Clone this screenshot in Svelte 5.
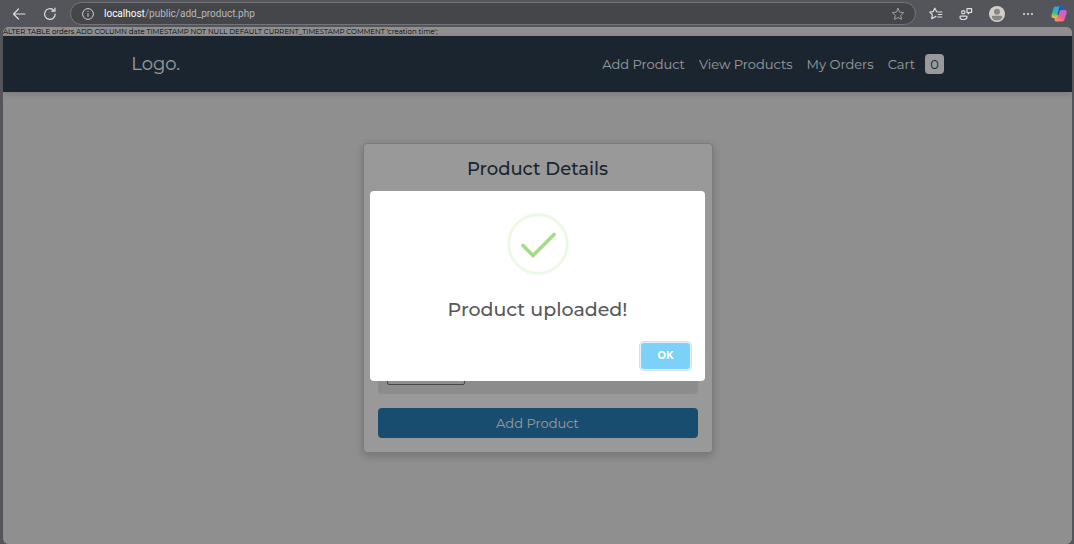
<script>
  let count = $state(0);
</script>

<div class="browser">
  <div class="toolbar">
    <button class="tool" aria-label="Back">
      <svg width="16" height="16" viewBox="0 0 16 16"><path d="M14 8H2.500M7.500 3l-5 5 5 5" /></svg>
    </button>
    <button class="tool" aria-label="Reload">
      <svg width="16" height="16" viewBox="0 0 16 16"><path d="M13.2 8a5.3 5.3 0 1 1-1.8-4M13 2v3.2H9.7" /></svg>
    </button>
    <div class="address">
      <svg width="14" height="14" viewBox="0 0 14 14"><circle cx="7" cy="7" r="5.4" /><path d="M7 6.3v3.5M7 4v1" /></svg>
      <span class="url"><b>localhost</b>/public/add_product.php</span>
      <button class="tool star" aria-label="Favorite">
        <svg width="14" height="14" viewBox="0 0 14 14"><path d="M7 1.4l1.7 3.7 4 .5-3 2.8.8 4L7 10.5l-3.5 1.9.8-4-3-2.8 4-.5z" /></svg>
      </button>
    </div>
    <div class="actions">
      <button class="tool" aria-label="Favorites">
        <svg width="14" height="14" viewBox="0 0 14 14"><path d="M8.800 5h4M9.300 7.500h3.500M8.800 10h4M7.700 4.700L5.800 1.200 4.200 4.600l-3.400.5 2.500 2.600-.6 4L6 9.900l1-.6" /></svg>
      </button>
      <button class="tool" aria-label="Share">
        <svg width="14" height="14" viewBox="0 0 14 14"><circle cx="4.3" cy="5.3" r="1.7" /><path d="M1.5 9.2h5.7c.8 0 1 .6.8 1.3-.4 1.4-1.8 2-3.4 2-2.3 0-3.6-1-3.6-2.6 0-.4.2-.7.5-.7zM8 1.7h4.6v3.6h-1.9L9.2 6.8V5.3H8z" /></svg>
      </button>
      <button class="tool" aria-label="Profile">
        <svg class="solid" width="16" height="16" viewBox="0 0 16 16"><circle cx="8" cy="8" r="8" fill="#d2cfca" /><circle cx="8" cy="5.8" r="3" fill="#888682" /><path d="M2.8 11.2c0-1 .6-1.4 1.5-1.4h7.4c.9 0 1.500.4 1.500 1.400-.7 2-2.800 3.300-5.200 3.300s-4.500-1.300-5.200-3.300z" fill="#888682" /></svg>
      </button>
      <button class="tool" aria-label="More">
        <svg class="solid" width="14" height="14" viewBox="0 0 14 14"><circle cx="3" cy="7" r="1" /><circle cx="7" cy="7" r="1" /><circle cx="11" cy="7" r="1" /></svg>
      </button>
      <button class="tool" aria-label="Copilot">
        <svg class="solid" width="16" height="16" viewBox="0 0 16 16">
          <defs>
            <linearGradient id="cool" x1="0" y1="0" x2="0" y2="1"><stop offset="0" stop-color="#22a7f0" /><stop offset=".5" stop-color="#38b99a" /><stop offset="1" stop-color="#f3c81e" /></linearGradient>
            <linearGradient id="warm" x1="1" y1="0" x2="0" y2="1"><stop offset="0" stop-color="#a56cf0" /><stop offset=".5" stop-color="#ef5d9b" /><stop offset="1" stop-color="#ff9a55" /></linearGradient>
          </defs>
          <path d="M4.800.6h5.700c1 0 1.600.5 1.900 1.500l.5 1.900h-2.400c-1 0-1.500.6-1.800 1.600l-1.500 5c-.3 1-.9 1.500-1.900 1.500H2.500C.8 12.100 0 10.700.5 9L2.300 2.900C2.700 1.400 3.500.6 4.800.6z" fill="url(#cool)" />
          <path d="M8.500.6h2c1 0 1.600.5 1.900 1.500l.6 2h-2.500c-1 0-1.600.6-1.900 1.600L7.600 9H6.200L8 2.200z" fill="#1d55c9" />
          <path d="M11.200 15.400H5.500c-1 0-1.500-.5-1.800-1.500l-.5-1.800h2.300c1 0 1.500-.5 1.800-1.500l1.500-5C9.100 4.500 9.600 4 10.600 4h2.900c1.700 0 2.500 1.300 2 3l-1.800 6.100c-.4 1.500-1.200 2.300-2.500 2.300z" fill="url(#warm)" />
        </svg>
      </button>
    </div>
  </div>

  <div class="page">
    <div class="notice">ALTER TABLE orders ADD COLUMN date TIMESTAMP NOT NULL DEFAULT CURRENT_TIMESTAMP COMMENT 'creation time';</div>
    <header>
      <a class="logo" href="#home">Logo.</a>
      <nav>
        <a href="#add">Add Product</a>
        <a href="#products">View Products</a>
        <a href="#orders">My Orders</a>
        <a class="cart" href="#cart">Cart <span class="badge">{count}</span></a>
      </nav>
    </header>
    <main>
      <form class="card" onsubmit={(e) => e.preventDefault()}>
        <h1>Product Details</h1>
        <div class="upload"><input type="file" aria-label="Product file" /></div>
        <button class="submit">Add Product</button>
      </form>
    </main>

    <div class="overlay">
      <div class="modal" role="dialog" aria-labelledby="result">
        <svg class="success" width="62" height="62" viewBox="0 0 62 62">
          <circle cx="31" cy="31" r="29.300" fill="none" stroke="#edf8e7" stroke-width="3" />
          <path d="M16 32.500l10 10L47 21.500" fill="none" stroke="#a5dc86" stroke-width="3.600" stroke-linecap="round" />
        </svg>
        <h2 id="result">Product uploaded!</h2>
        <div class="footer"><button class="ok">OK</button></div>
      </div>
    </div>
  </div>
</div>

<style>
  :global(body) { margin: 0; background: #54555b; }
  .browser, .browser * { box-sizing: border-box; }
  .browser {
    min-height: 100vh;
    display: flex;
    flex-direction: column;
    padding: 0 2px 0 3px;
    background: #54555b;
    font-family: Montserrat, Inter, sans-serif;
  }
  button { font: inherit; border: 0; cursor: pointer; }
  a { color: inherit; text-decoration: none; }
  svg { display: block; }
  .toolbar { display: flex; align-items: center; height: 27px; padding: 0 5px 0 8px; }
  .tool { display: flex; padding: 0; margin-right: 15px; background: none; }
  .tool svg { fill: none; stroke: #dededf; stroke-width: 1.200; stroke-linecap: round; stroke-linejoin: round; }
  .tool svg.solid { fill: #e6e6e6; stroke: none; }
  .address {
    flex: 1;
    display: flex;
    align-items: center;
    gap: 9px;
    height: 23px;
    margin: 0 13px 0 -3px;
    padding: 0 10px;
    border: 1px solid #74757a;
    border-radius: 12px;
    background: #45464a;
    color: #b9b9bb;
    font: 10px/14px Roboto, "Open Sans", sans-serif;
  }
  .address > svg { fill: none; stroke: #d0d0d1; }
  .url { flex: 1; white-space: nowrap; }
  .url b { color: #fff; font-weight: 400; }
  .star { margin: 0; }
  .star svg { stroke: #a0a0a2; stroke-width: 1; }
  .actions { display: flex; align-items: center; gap: 16px; }
  .actions .tool { margin: 0; }

  .page {
    position: relative;
    flex: 1;
    display: flex;
    flex-direction: column;
    overflow: hidden;
    border-radius: 6px;
    background: #eee;
  }
  .notice { height: 9px; font-size: 7px; line-height: 9px; color: #000; white-space: nowrap; }
  header {
    display: flex;
    align-items: center;
    justify-content: space-between;
    height: 56px;
    padding: 0 12%;
    background: #2c3e50;
    color: #fff;
    box-shadow: 0 2px 6px rgba(0, 0, 0, 0.15);
  }
  .logo { font-size: 18px; font-weight: 400; }
  nav { display: flex; align-items: center; gap: 14px; font-size: 13px; }
  .cart { display: flex; align-items: center; gap: 10px; }
  .badge {
    padding: 0 5px;
    border-radius: 4px;
    background: #fff;
    color: #2c3e50;
    line-height: 20px;
  }
  main { display: flex; justify-content: center; padding: 51px 16px; }
  .card {
    display: flex;
    flex-direction: column;
    gap: 14px;
    width: 100%;
    max-width: 350px;
    padding: 13px 14px 14px;
    border: 1px solid #ccc;
    border-radius: 4px;
    background: #fff;
    box-shadow: 0 3px 8px rgba(0, 0, 0, 0.2);
  }
  h1 { margin: 0; text-align: center; font-size: 18px; line-height: 24px; font-weight: 500; color: #2c3e50; }
  .upload {
    display: flex;
    align-items: flex-end;
    min-height: 199px;
    padding: 9px;
    border-radius: 4px;
    background: #e9e9e9;
  }
  input { width: 100%; height: 20px; font: 11px/18px Inter, sans-serif; }
  input::file-selector-button {
    width: 78px;
    height: 20px;
    padding: 0;
    border: 1px solid #767676;
    border-radius: 2px;
    background: #efefef;
  }
  .submit { height: 30px; padding: 0; border-radius: 4px; background: #2980b9; color: #fff; font-size: 13px; }

  .overlay {
    position: absolute;
    inset: 0;
    display: flex;
    align-items: center;
    justify-content: center;
    background: rgba(0, 0, 0, 0.4);
  }
  .modal {
    display: flex;
    flex-direction: column;
    align-items: center;
    width: 335px;
    padding-top: 22px;
    border-radius: 4px;
    background: #fff;
  }
  h2 { margin: 21px 0 19px; font-size: 19px; line-height: 28px; font-weight: 500; color: #595959; }
  .footer { align-self: stretch; display: flex; justify-content: flex-end; padding: 0 15px 12px; }
  .ok {
    width: 49px;
    height: 26px;
    padding: 0;
    border-radius: 3px;
    background: #7cd1f9;
    color: #fff;
    font-size: 10px;
    font-weight: 700;
    box-shadow: 0 0 0 1px #e6f1f8, 0 0 0 2px #cddfeb;
  }
</style>
